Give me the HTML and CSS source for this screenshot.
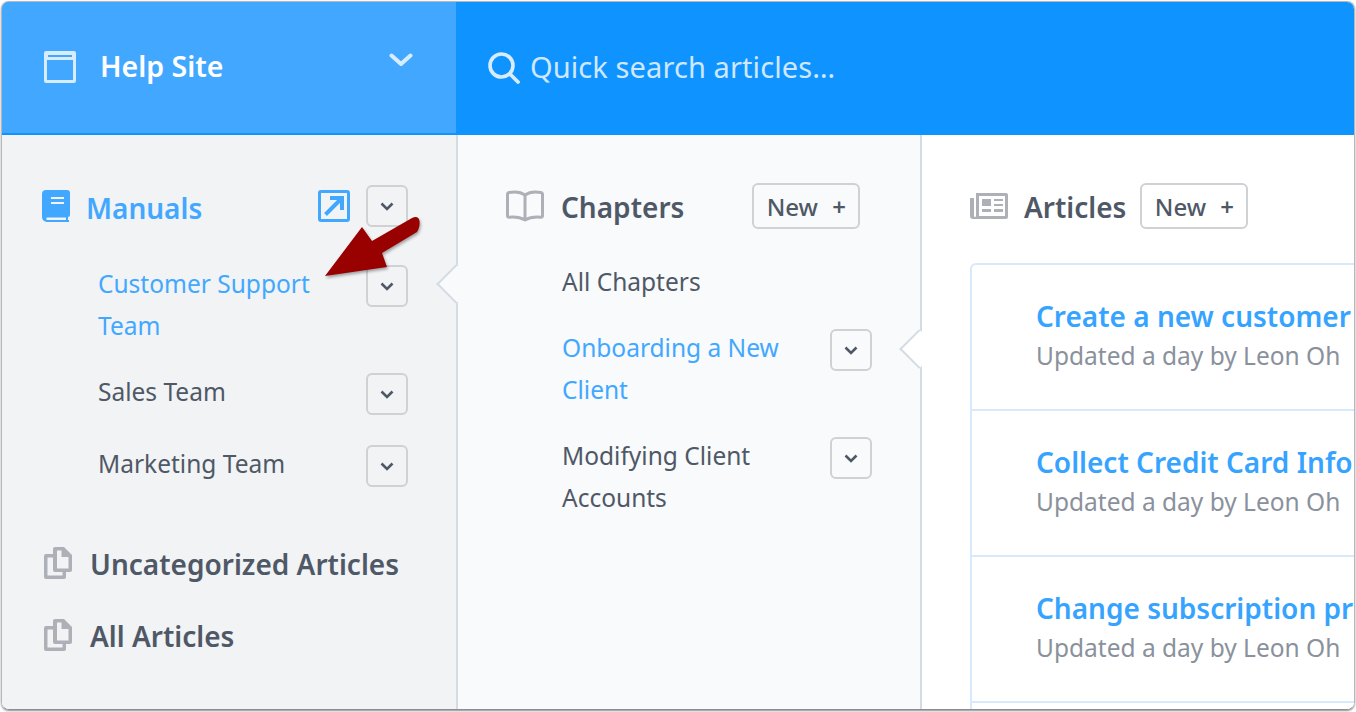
FILE: index.html
```html
<!DOCTYPE html>
<html lang="en">
<head>
<meta charset="utf-8">
<title>Help Site</title>
<link rel="stylesheet" href="styles.css">
</head>
<body>
<div class="window">
  <header class="topbar">
    <div class="site">
      <svg class="site-icon" viewBox="0 0 32 32"><path d="M2 0h28a2 2 0 0 1 2 2v28a2 2 0 0 1-2 2H2a2 2 0 0 1-2-2V2a2 2 0 0 1 2-2zM4 4v2h24V4zM3 9v20h26V9z" fill="#d8ecff" fill-rule="evenodd"/></svg>
      <span class="site-name">Help Site</span>
      <svg class="site-chevron" viewBox="0 0 24 14"><path d="M2.500 2.500 12 11 21.500 2.500" fill="none" stroke="#d8ecff" stroke-width="4" stroke-linecap="round" stroke-linejoin="round"/></svg>
    </div>
    <div class="search">
      <svg class="search-icon" viewBox="0 0 32 32"><circle cx="13.500" cy="13.500" r="11.500" fill="none" stroke="#d8ecff" stroke-width="3.600"/><path d="M22 22 30 30" stroke="#d8ecff" stroke-width="3.800" stroke-linecap="round"/></svg>
      <span class="search-text">Quick search articles…</span>
    </div>
  </header>
  <main class="panes">
    <nav class="sidebar">
      <div class="head-row">
        <svg class="manual-icon" viewBox="0 0 28 32"><path d="M4 0h21a3 3 0 0 1 3 3v22a2 2 0 0 1-2 2v3h1v2H5a5 5 0 0 1-5-5V4a4 4 0 0 1 4-4zM9 7v2h13V7zM9 12v2h13v-2zM5 27.500a1.500 1.500 0 0 0 0 2.500h19v-2.500z" fill="#42a8ff" fill-rule="evenodd"/></svg>
        <span class="manuals">Manuals</span>
        <svg class="ext-icon" viewBox="0 0 32 32"><rect x="1.500" y="1.500" width="29" height="29" rx="1.500" fill="none" stroke="#42a8ff" stroke-width="3"/><path d="M7.500 24.500 23 9M12 8h12v12" fill="none" stroke="#42a8ff" stroke-width="4"/></svg>
        <button class="drop"><svg class="chev" viewBox="0 0 14 9"><path d="M1.500 1.500 7 7l5.500-5.500" /></svg></button>
      </div>
      <ul class="side-list">
        <li class="row"><span class="label active">Customer Support Team</span><button class="drop"><svg class="chev" viewBox="0 0 14 9"><path d="M1.500 1.500 7 7l5.500-5.500" /></svg></button><i class="notch"></i></li>
        <li class="row"><span class="label">Sales Team</span><button class="drop"><svg class="chev" viewBox="0 0 14 9"><path d="M1.500 1.500 7 7l5.500-5.500" /></svg></button></li>
        <li class="row"><span class="label">Marketing Team</span><button class="drop"><svg class="chev" viewBox="0 0 14 9"><path d="M1.500 1.500 7 7l5.500-5.500" /></svg></button></li>
      </ul>
      <div class="side-links">
        <a class="side-link"><svg class="copy-icon" viewBox="0 0 28 32"><path d="M11 0h9l8 8v15a2 2 0 0 1-2 2h-4v5a2 2 0 0 1-2 2H2a2 2 0 0 1-2-2V9a2 2 0 0 1 2-2h7V2a2 2 0 0 1 2-2zM13 3.500v18h11.500V10h-7V3.500zM3.500 10.500v18h15v-3.500H11a2 2 0 0 1-2-2V10.500z" fill="#adb0b7" fill-rule="evenodd"/></svg><span>Uncategorized Articles</span></a>
        <a class="side-link"><svg class="copy-icon" viewBox="0 0 28 32"><path d="M11 0h9l8 8v15a2 2 0 0 1-2 2h-4v5a2 2 0 0 1-2 2H2a2 2 0 0 1-2-2V9a2 2 0 0 1 2-2h7V2a2 2 0 0 1 2-2zM13 3.500v18h11.500V10h-7V3.500zM3.500 10.500v18h15v-3.500H11a2 2 0 0 1-2-2V10.500z" fill="#adb0b7" fill-rule="evenodd"/></svg><span>All Articles</span></a>
      </div>
    </nav>
    <section class="chapters">
      <div class="title-row">
        <svg class="book-icon" viewBox="0 0 38 32"><path d="M19 5C15 2 8 1.500 3 2.500 2 2.700 1.500 3.500 1.500 4.500v21c0 1 .7 1.800 1.700 1.800 5-.5 11 0 15.800 2.700 4.800-2.700 10.800-3.200 15.800-2.700 1 0 1.700-.8 1.700-1.800v-21c0-1-.5-1.800-1.500-2C30 1.500 23 2 19 5zM19 5v25" fill="none" stroke="#adb0b7" stroke-width="3" stroke-linejoin="round"/></svg>
        <h2 class="title">Chapters</h2>
        <button class="new-btn chapters-new">New <b class="plus">+</b></button>
      </div>
      <ul class="chapter-list">
        <li class="row"><span class="label">All Chapters</span></li>
        <li class="row"><span class="label active">Onboarding a New Client</span><button class="drop"><svg class="chev" viewBox="0 0 14 9"><path d="M1.500 1.500 7 7l5.500-5.500" /></svg></button><i class="notch notch-white"></i></li>
        <li class="row"><span class="label">Modifying Client Accounts</span><button class="drop"><svg class="chev" viewBox="0 0 14 9"><path d="M1.500 1.500 7 7l5.500-5.500" /></svg></button></li>
      </ul>
    </section>
    <section class="articles">
      <div class="title-row articles-head">
        <svg class="news-icon" viewBox="0 0 38 26"><path d="M6 0h30a2 2 0 0 1 2 2v22a2 2 0 0 1-2 2H3a3 3 0 0 1-3-3V5h4v18a1 1 0 0 0 2 0zM9 3v20h26V3zM12 6h9v7h-9zM24 6h9v2h-9zM24 11h9v2h-9zM12 16h9v3h-9zM24 16h9v3h-9z" fill="#adb0b7" fill-rule="evenodd"/></svg>
        <h2 class="title">Articles</h2>
        <button class="new-btn">New <b class="plus">+</b></button>
      </div>
      <div class="cards">
        <article class="card"><h3 class="card-title">Create a new customer</h3><p class="card-sub">Updated a day by Leon Oh</p></article>
        <article class="card"><h3 class="card-title">Collect Credit Card Info</h3><p class="card-sub">Updated a day by Leon Oh</p></article>
        <article class="card"><h3 class="card-title">Change subscription pr</h3><p class="card-sub">Updated a day by Leon Oh</p></article>
      </div>
    </section>
  </main>
  <svg class="arrow" viewBox="0 0 110 70"><path d="M5 56 42 7 52 21 92 -2C96 -4 99 -3 99.500 1 100 5 99 9 97 12L62 33 67 47Z" fill="#990000"/></svg>
</div>
</body>
</html>
```

FILE: styles.css
```css
* { box-sizing: border-box; }
html, body { margin: 0; padding: 0; background: #fff; }
body { width: 1356px; height: 712px; overflow: hidden; font-family: "Noto Sans", "Open Sans", sans-serif; color: #4f5866; }
ul { list-style: none; margin: 0; padding: 0; }
h2, h3, p { margin: 0; }

.window { position: relative; margin: 1px 1px 0 1px; width: 1354px; height: 709px; border: 1px solid #b5b7ba; border-bottom-color: #8b8d90; border-radius: 8px; overflow: hidden; display: flex; flex-direction: column; box-shadow: 0 1px 2px rgba(0,0,0,.45); }

.topbar { display: flex; height: 133px; flex: none; background: #0f94ff; }
.site { width: 454px; background: #42a8ff; border-bottom: 2px solid #0f94ff; display: flex; align-items: center; padding: 0 43px 2px 42px; }
.site-icon { width: 32px; height: 32px; flex: none; }
.site-name { margin: 0 0 2px 24px; font-size: 28.500px; font-weight: 600; color: #fff; flex: 1; }
.site-chevron { width: 24px; height: 14px; margin-bottom: 14px; }
.search { flex: 1; display: flex; align-items: center; padding: 0 0 4px 32px; }
.search-icon { width: 32px; height: 32px; flex: none; margin-top: 2px; }
.search-text { margin-left: 10px; font-size: 29px; color: #cfe8ff; letter-spacing: .1px; }

.panes { flex: 1; display: flex; min-height: 0; }
.sidebar { width: 456px; flex: none; background: #f1f3f5; border-right: 2px solid #d3dbe3; padding: 50px 48px 0 40px; }
.head-row { display: flex; align-items: center; height: 42px; }
.manual-icon { width: 28px; height: 32px; flex: none; }
.manuals { margin: 4px 0 0 16px; flex: 1; font-size: 28px; font-weight: 600; color: #42a8ff; }
.ext-icon { width: 32px; height: 32px; flex: none; margin-right: 16px; }

.drop { width: 42px; height: 42px; flex: none; padding: 0; background: transparent; border: 2px solid #cfd1d5; border-radius: 6px; display: flex; align-items: center; justify-content: center; }
.chev { width: 14px; height: 9px; fill: none; stroke: #4f5866; stroke-width: 2.600; }

.row { position: relative; display: flex; align-items: flex-start; justify-content: space-between; }
.row .drop { margin-top: 2px; margin-bottom: 4px; }
.label { flex: 1; font-size: 24.500px; line-height: 42px; color: #4f5866; padding-right: 10px; }
.label.active { color: #42a8ff; }
.side-list { margin: 36px 0 0 56px; display: flex; flex-direction: column; gap: 24px; }
.chapter-list { margin: 32px 0 0 56px; display: flex; flex-direction: column; gap: 24px; padding-right: 48px; }

.notch { position: absolute; right: -62px; top: 7px; width: 28px; height: 28px; transform: rotate(45deg); background: #f8fafc; border-left: 2px solid #d3dbe3; border-bottom: 2px solid #d3dbe3; }
.notch-white { right: -61px; top: 8px; background: #fff; }

.side-links { margin-top: 53px; display: flex; flex-direction: column; gap: 32px; }
.side-link { display: flex; align-items: center; height: 40px; font-size: 28px; font-weight: 600; color: #4f5866; }
.side-link span { margin-left: 18px; }
.copy-icon { width: 28px; height: 32px; flex: none; margin: 0 0 2px 2px; }

.chapters { width: 464px; flex: none; background: #f8fafc; border-right: 2px solid #d3dbe3; padding: 48px 0 0 48px; position: relative; }
.title-row { display: flex; align-items: center; height: 46px; }
.book-icon { width: 38px; height: 32px; flex: none; }
.news-icon { width: 38px; height: 26px; flex: none; }
.title { margin: 2px 0 0 17px; font-size: 28px; font-weight: 600; color: #4f5866; }
.new-btn { margin-left: 14px; height: 46px; width: 108px; padding: 0; background: #fff; border: 2px solid #cfd1d5; border-radius: 6px; font: 500 24px "Noto Sans", sans-serif; color: #4f5866; }
.chapters-new { margin-left: 68px; background: transparent; }
.plus { margin-left: 8px; font-weight: 600; }

.articles { flex: 1; min-width: 0; background: #fff; padding: 48px 0 0 48px; overflow: hidden; }
.articles-head .title { margin-left: 16px; }
.cards { margin-top: 34px; width: 600px; height: 520px; border: 2px solid #d6eafc; border-radius: 6px 0 0 6px; }
.card { height: 146px; padding: 32px 0 0 64px; border-bottom: 2px solid #d6eafc; white-space: nowrap; }
.card-title { font-size: 28px; font-weight: 600; line-height: 38px; margin-bottom: 1px; color: #36a4ff; }
.card-sub { font-size: 24.500px; line-height: 40px; color: #8a919c; }

.arrow { position: absolute; left: 318px; top: 218px; width: 110px; height: 70px; overflow: visible; pointer-events: none; filter: drop-shadow(1px 2px 1.500px rgba(0,0,0,.35)); }
```
